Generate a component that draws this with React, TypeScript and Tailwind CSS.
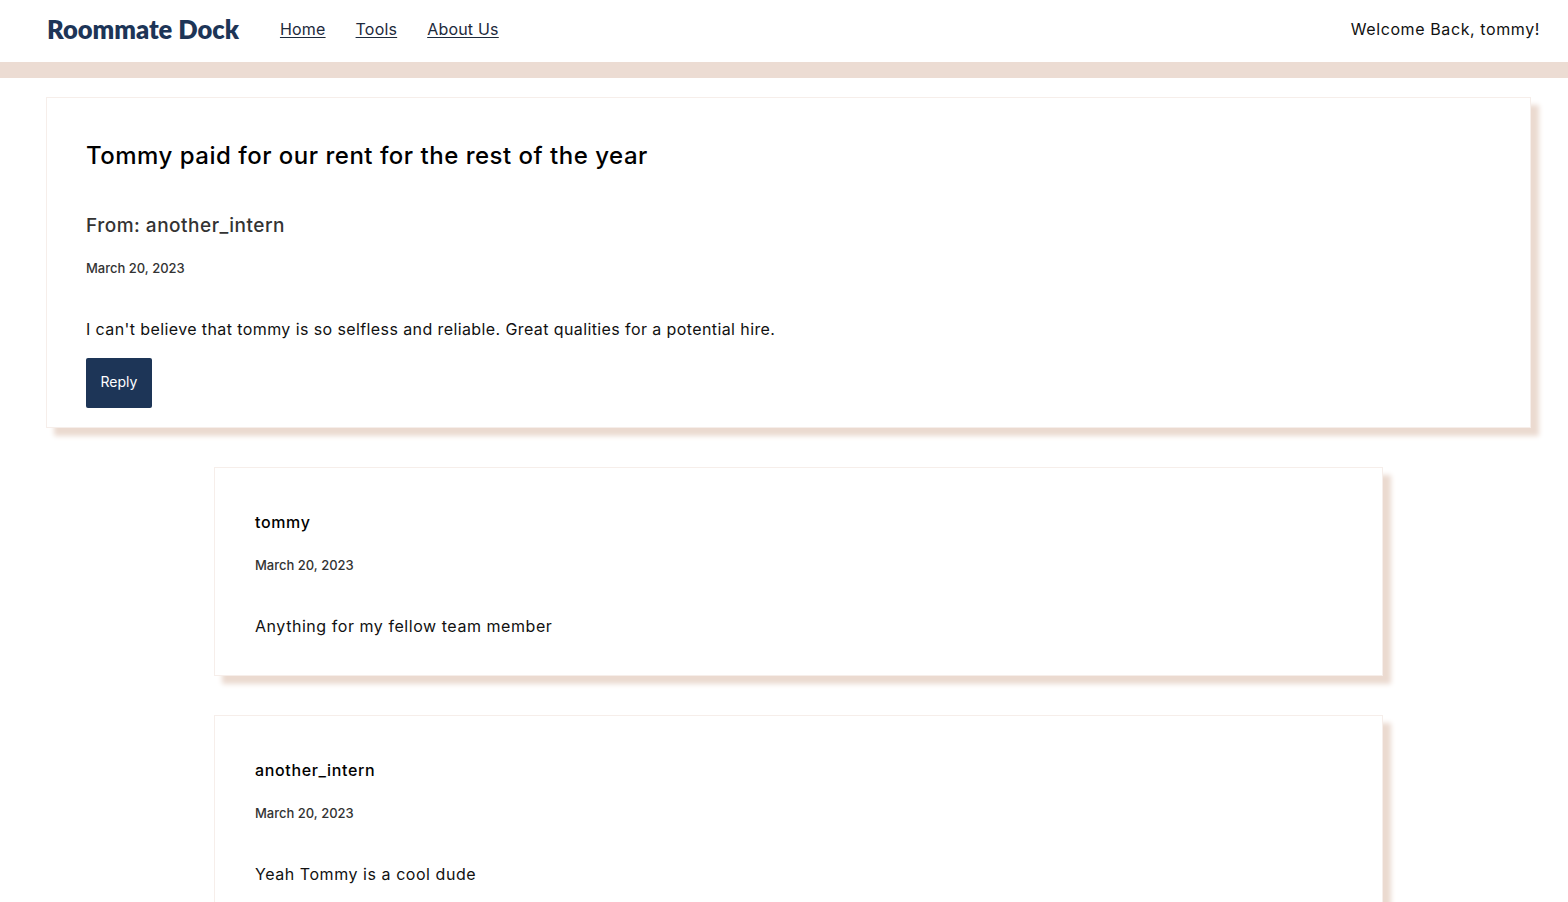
import React from "react";

const font = { fontFamily: '"Inter", "Open Sans", sans-serif' };

const replies = [
  { user: "tommy", date: "March 20, 2023", text: "Anything for my fellow team member" },
  { user: "another_intern", date: "March 20, 2023", text: "Yeah Tommy is a cool dude" },
];

function Header() {
  return (
    <header className="flex h-[62px] items-center justify-between bg-white pb-[4px] pl-[47px] pr-[28px]">
      <div className="flex items-center">
        <span className="text-[25.5px] font-extrabold text-[#1d3557]" style={{ fontFamily: '"Lato", sans-serif' }}>
          Roommate Dock
        </span>
        <nav className="ml-[41px] flex items-center gap-[30px] text-[16px] tracking-[0.2px] text-[#1d2a3c]">
          <a href="#" className="underline underline-offset-2">Home</a>
          <a href="#" className="underline underline-offset-2">Tools</a>
          <a href="#" className="underline underline-offset-2">About Us</a>
        </nav>
      </div>
      <span className="text-[16px] tracking-[0.6px] text-[#111]">Welcome Back, tommy!</span>
    </header>
  );
}

export default function App() {
  return (
    <div className="min-h-screen bg-white text-black" style={font}>
      <Header />
      <div className="h-[16px] bg-[#ecdcd3]" />

      <main className="pt-[19px]">
        {/* post principal */}
        <section className="mx-[46px] w-[1485px] border border-[#f6eeea] bg-white px-[39px] pb-[19px] pt-[40px] shadow-[8px_8px_5px_#ebdad0]">
          <h1 className="text-[24px] font-medium leading-[36px] tracking-[0.5px] text-black">
            Tommy paid for our rent for the rest of the year
          </h1>
          <h2 className="mt-[38px] text-[19px] font-medium leading-[28px] tracking-[0.5px] text-[#333]">
            From: another_intern
          </h2>
          <p className="mt-[18px] text-[13px] font-medium leading-[20px] text-[#333]">March 20, 2023</p>
          <p className="mt-[39px] text-[16px] leading-[24px] tracking-[0.4px] text-[#111]">
            I can't believe that tommy is so selfless and reliable. Great qualities for a potential hire.
          </p>
          <button className="mt-[17px] h-[50px] w-[66px] rounded-[2px] bg-[#1d3557] pb-[3px] text-[14px] text-white">
            Reply
          </button>
        </section>

        {/* réponses */}
        <div className="mt-[39px] flex flex-col gap-[39px] pl-[214px]">
          {replies.map((r) => (
            <article
              key={r.user}
              className="w-[1169px] border border-[#f6eeea] bg-white px-[40px] pb-[37px] pt-[42px] shadow-[8px_8px_5px_#ebdad0]"
            >
              <h3 className="text-[16px] font-medium leading-[24px] tracking-[0.65px] text-black">{r.user}</h3>
              <p className="mt-[21px] text-[13px] font-medium leading-[20px] text-[#333]">{r.date}</p>
              <p className="mt-[39px] text-[16px] leading-[24px] tracking-[0.55px] text-[#111]">{r.text}</p>
            </article>
          ))}
        </div>
      </main>
    </div>
  );
}
